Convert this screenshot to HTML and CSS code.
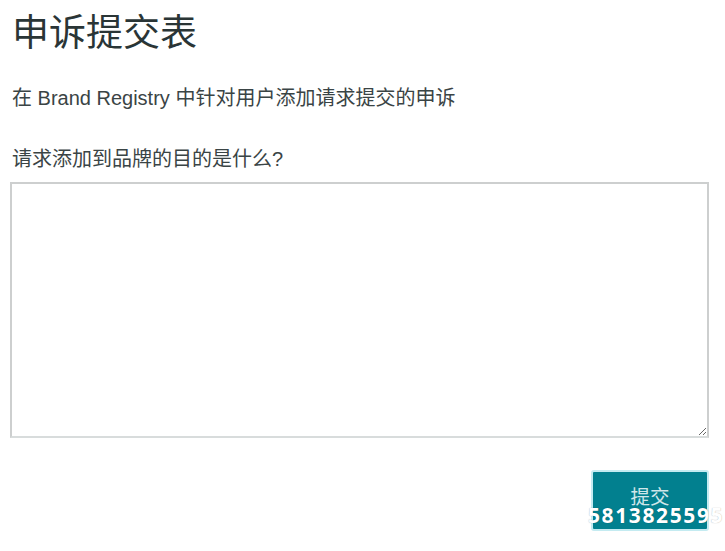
FILE: index.html
```html
<!DOCTYPE html>
<html lang="zh-CN">
<head>
<meta charset="utf-8">
<title>申诉提交表</title>
<link rel="stylesheet" href="styles.css">
</head>
<body>
<main class="page">
  <h1 class="title">申诉提交表</h1>
  <p class="intro">在 Brand Registry 中针对用户添加请求提交的申诉</p>
  <form class="form">
    <label class="label" for="purpose">请求添加到品牌的目的是什么?</label>
    <textarea id="purpose" class="field"></textarea>
    <div class="actions">
      <button type="button" class="submit">提交<span class="watermark">5813825595</span></button>
    </div>
  </form>
</main>
</body>
</html>
```
FILE: styles.css
```css
html, body {
  margin: 0;
  padding: 0;
  background: #ffffff;
}
body {
  font-family: "Liberation Sans", "Noto Sans CJK SC", sans-serif;
  color: #333b3c;
}
.page {
  padding: 12px 16px 0 10px;
  display: flex;
  flex-direction: column;
}
.title {
  margin: 0;
  padding-left: 2px;
  font-size: 37px;
  line-height: 44px;
  font-weight: normal;
  color: #2a3536;
}
.intro {
  margin: 28px 0 0;
  padding-left: 2px;
  font-size: 20px;
  line-height: 28px;
  color: #3a4445;
}
.form {
  display: flex;
  flex-direction: column;
  margin-top: 33px;
}
.label {
  display: block;
  padding-left: 2px;
  font-size: 20px;
  line-height: 28px;
  color: #3a4445;
}
.field {
  box-sizing: border-box;
  margin: 9px 0 0;
  width: 699px;
  height: 256px;
  border: 2px solid #cdcfcf;
  border-bottom-color: #d8dcdc;
  background: #fff;
  padding: 6px;
  font-family: inherit;
  font-size: 16px;
  outline: none;
}
.actions {
  display: flex;
  justify-content: flex-end;
  margin-top: 32px;
}
.submit {
  position: relative;
  box-sizing: border-box;
  width: 118px;
  height: 61px;
  border: 2px solid #c4ebf1;
  border-radius: 3px;
  background: #02808f;
  color: rgba(255, 255, 255, 0.82);
  font-family: "Liberation Sans", "Noto Sans CJK SC", sans-serif;
  font-size: 19.5px;
  line-height: 24px;
  padding: 0 0 8px;
  cursor: pointer;
}
.watermark {
  position: absolute;
  left: -5px;
  top: 31px;
  font-family: "Noto Sans", "Liberation Sans", sans-serif;
  font-weight: bold;
  font-size: 21px;
  line-height: 24px;
  letter-spacing: 1.6px;
  white-space: nowrap;
  color: #ffffff;
  text-shadow: 0 0 1px rgba(0, 0, 0, 0.35);
}
```
